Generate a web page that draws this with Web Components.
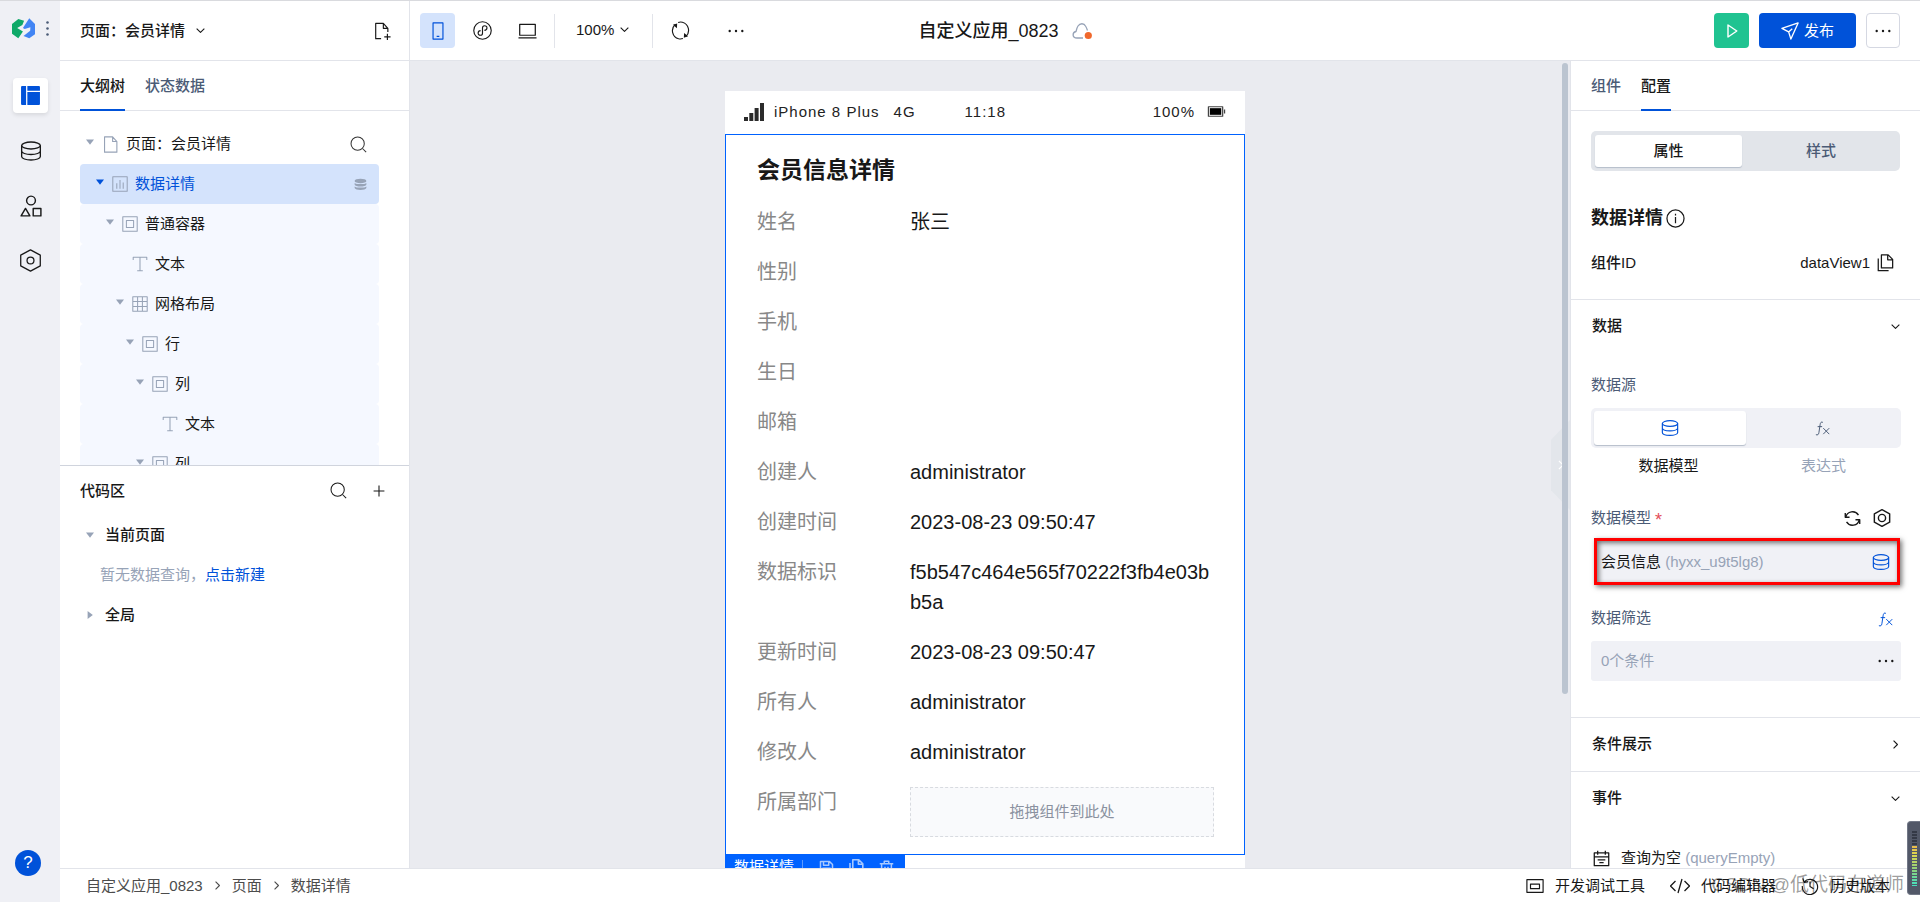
<!DOCTYPE html>
<html lang="zh-CN">
<head>
<meta charset="utf-8">
<title>自定义应用_0823</title>
<style>
html,body{margin:0;height:100%;}
body{font:15px/20px "Liberation Sans","Noto Sans CJK SC",sans-serif;color:#181818;background:#fff;overflow:hidden;}
</style>
</head>
<body>
<app-shell></app-shell>
<script>
const BASE = `
*{box-sizing:border-box}
button{font:inherit;color:inherit;background:none;border:0;padding:0;margin:0;cursor:pointer;display:flex;align-items:center;justify-content:center}
a{color:inherit;text-decoration:none}
h1,h2,h3,p,ul,dl,dd{margin:0;padding:0}
`;
const define = (name, css, html) => customElements.define(name, class extends HTMLElement {
  constructor() {
    super();
    this.attachShadow({mode: 'open'});
  }
  connectedCallback() {
    if (this.shadowRoot.childNodes.length) return;
    const t = document.createElement('template');
    t.innerHTML = `<style>${BASE}${css}</style>` + (typeof html === 'function' ? html(this) : html);
    this.shadowRoot.append(t.content.cloneNode(true));
  }
});

/* icon shapes on a 20 x 20 grid */
const DB = '<ellipse cx="10" cy="5" rx="8.5" ry="3.2"/><path d="M1.500 5v10c0 1.800 3.800 3.200 8.500 3.200s8.500-1.400 8.500-3.200V5M1.500 10c0 1.800 3.800 3.200 8.500 3.200s8.500-1.400 8.500-3.200"/>';
const HEX = '<path d="M10 .800 18.500 5.300v9.400L10 19.200l-8.500-4.500V5.300z"/>';
const ICONS = {
  logo: '<g stroke="none"><path fill="#0fa968" d="M0 6 5.500 1.800 10.500 3.200 9 7 4.500 9.600 9.500 12.500 5.500 18.500 0 14.500z"/><path fill="#4285f4" d="M20 6 15 1 9.500 9.500 11 10.500 16 9 15.800 12 10 16.500 15 18.500 20 15z"/></g>',
  vdots: '<g fill="currentColor" stroke="none"><circle cx="10" cy="2" r="1.700"/><circle cx="10" cy="10" r="1.700"/><circle cx="10" cy="18" r="1.700"/></g>',
  dots: '<g fill="currentColor" stroke="none"><circle cx="3" cy="10" r="1.300"/><circle cx="10" cy="10" r="1.300"/><circle cx="17" cy="10" r="1.300"/></g>',
  layout: '<g fill="currentColor" stroke="none"><path d="M1 2a1 1 0 0 1 1-1h3.800v18H2a1 1 0 0 1-1-1zM7 1h11a1 1 0 0 1 1 1v3.500H7zM7 6.700h12V18a1 1 0 0 1-1 1H7z"/></g>',
  db: DB,
  dbfill: '<g fill="currentColor" stroke="none"><ellipse cx="10" cy="4.500" rx="9" ry="3.500"/><path d="M1 7.500c2 2.400 16 2.400 18 0v3c-1 3.600-17 3.600-18 0zM1 13c2 2.400 16 2.400 18 0v2.500c-1 3.800-17 3.800-18 0z"/></g>',
  shapes: '<circle cx="10" cy="5" r="4"/><path d="M5 12.200 9 19H1zM12 12.200h7V19h-7z"/>',
  hex: HEX + '<circle cx="10" cy="10" r="3"/>',
  gear: HEX + '<circle cx="10" cy="10" r="4"/>',
  down: '<path d="m3 6.500 7 7 7-7"/>',
  right: '<path d="m6.500 3 7 7-7 7"/>',
  tri: '<path fill="currentColor" stroke="none" d="M0 4h20L10 17z"/>',
  tright: '<path fill="currentColor" stroke="none" d="M4 0v20l13-10z"/>',
  pageadd: '<path d="M9 18.500H3V1.500h8.500L16.500 7v4M11.500 1.500V7h5M16 13v7M12.500 16.500h7"/>',
  page: '<path d="M3 1h9.500L17.500 6.500V19H3zM12.500 1v5.500h5"/>',
  copy: '<path d="M6 1h7.500L18.500 6v9.500H6zM13 1v5.500h5.500M2.500 5v13.500H14"/>',
  phone: '<path d="M4.500 1h11v18h-11zM8.500 16h3"/>',
  mini: '<circle cx="10" cy="10" r="9.200"/><path d="M12 9.800c3.500-.300 3.600-4.800.200-4.800-1.200 0-2.200.900-2.200 2.200v5.600c0 1.300-1 2.200-2.200 2.200-3.300 0-3.200-4.500.200-4.800"/>',
  laptop: '<path d="M1.800 3.500h16.400v11.500H1.800zM.500 17.800h19"/>',
  sync: '<path d="M4.500 3.500a8.900 8.900 0 0 0 3.500 15.200M15.500 16.500a8.900 8.900 0 0 0-3.500-15.200M7.500 1.500a9 9 0 0 1 4.500-.200M12.500 18.500a9 9 0 0 1-4.500.200"/><path fill="currentColor" stroke="none" d="m2 4 4.500-1.500-.300 5zM18 16l-4.500 1.500.300-5z"/>',
  refresh: '<path d="M2 8.500A8.200 8.200 0 0 1 17 6M18 11.500A8.200 8.200 0 0 1 3 14M1.500 3.500v5h5M18.500 16.500v-5h-5"/>',
  cloud: '<path d="M11 17H5C0 17 0 11.500 4 10.500 4.500 8 5 6.500 6 5c2-3 6-3 7.500 0 1 1.500 1.500 3 2 4.500"/><circle cx="16.300" cy="14.500" r="3.600" fill="#f0682c" stroke="none"/>',
  play: '<path d="M5 2.500v15L16 10z"/>',
  plane: '<path d="M1 7 19 1l-8 18-2.500-8zM8.500 11 12.500 7.500"/>',
  search: '<circle cx="9" cy="9" r="7.800"/><path d="m15 15 4 4"/>',
  plus: '<path d="M10 1v18M1 10h18"/>',
  chart: '<path d="M1 1h18v18H1zM6 9v7M10 5v11M14 8v8"/>',
  box: '<path d="M1 1h18v18H1zM5.500 5.500h9v9h-9z"/>',
  text: '<path d="M1.500 5V1.500h17V5M10 1.500v17M6.500 18.500h7"/>',
  grid: '<path d="M1 1h18v18H1zM7 1v18M13 1v18M1 7h18M1 13h18"/>',
  info: '<circle cx="10" cy="10" r="9"/><path d="M10 8.500V15M10 5v1.800"/>',
  fx: '<path d="M10.500 1.800C8.200.600 7.200 2.200 6.800 5L5.200 15.500c-.400 2.700-1.800 3.700-4 2.700M3.500 7.500h6M11 9.500l8 8M19 9.500l-8 8"/>',
  event: '<path d="M1.500 3.500h17v15h-17zM5.500 1v4.500M14.500 1v4.500M1.500 8h17M5.500 11.500h9M7.500 14.800h5"/>',
  dev: '<path d="M1 3h18v14H1zM5 8h10v5H5z"/>',
  code: '<path d="m5.500 5-5 5 5 5M14.500 5l5 5-5 5M12 3 8 17"/>',
  history: '<path d="M3.500 5.500A8.500 8.500 0 1 1 1.500 10M2 1.500l1.500 4.500L8 5M10 5v5.500l4 2.500"/>',
  signal: '<g fill="#2b2b2b" stroke="none"><path d="M0 15h4v4H0zM5.300 11h4v8h-4zM10.600 6h4v13h-4zM16 1h4v18h-4z"/></g>',
  battery: '<path stroke="#444" d="M1.500 5h15v10h-15zM18.500 8v4"/><path fill="#000" stroke="none" d="M3 6.500h12v7H3z"/>',
  save: '<path d="M2 2h12l4 4v12H2zM6 2v5h7V2M5 18v-7h10v7"/>',
  trash: '<path d="M1 5h18M7 5V1.500h6V5M3.500 5v14h13V5M8 9v6M12 9v6"/>'
};
/* <ui-icon name size weight>: weight is the stroke width on the 20-unit grid */
define('ui-icon', `
:host{display:inline-flex;flex:none}
svg{display:block;fill:none;stroke:currentColor;stroke-linejoin:round}`,
  el => { const s = el.getAttribute('size') || 18;
    return `<svg width="${s}" height="${s}" viewBox="0 0 20 20" stroke-width="${el.getAttribute('weight') || 1.3}" aria-hidden="true">${ICONS[el.getAttribute('name')]}</svg>`; });

define('app-rail', `
:host{display:flex;flex-direction:column;background:#eff0f5;padding:15px 12px 26px 13px}
.brand{display:flex;align-items:center;gap:5px;height:24px;margin:0 0 38px -1px;color:#4b5b76}
nav{display:flex;flex-direction:column;gap:20px}
nav button{width:35px;height:35px;border-radius:4px}
nav .on{background:#fff;color:#0052d9;box-shadow:0 2px 4px #0000001a}
.help{margin-top:auto;margin-left:2px;width:26px;height:26px;border-radius:50%;background:#0052d9;color:#fff;font-size:17px}`, `
<div class="brand"><ui-icon name="logo" size="23"></ui-icon><ui-icon name="vdots" size="15"></ui-icon></div>
<nav>
<button class="on" aria-label="页面"><ui-icon name="layout" size="21"></ui-icon></button>
<button aria-label="数据"><ui-icon name="db" size="22" weight="1.200"></ui-icon></button>
<button aria-label="组件"><ui-icon name="shapes" size="22"></ui-icon></button>
<button aria-label="设置"><ui-icon name="hex" size="23" weight="1.100"></ui-icon></button>
</nav>
<button class="help">?</button>`);

define('app-header', `
:host{display:grid;grid-template-columns:1fr auto 1fr;border-bottom:1px solid #e2e4ea}
.left,.tools,.right,.mid{display:flex;align-items:center}
.page{width:350px;border-right:1px solid #e2e4ea;align-self:stretch;display:flex;align-items:center;justify-content:space-between;padding:0 18px 0 20px;flex:none}
.page button:first-child{font-weight:500;gap:10px}
.tools{padding-left:10px}
.tools button{width:35px;height:35px;border-radius:4px}
.tools button+button{margin-left:10px}
.tools .on{background:#d4e3fc;color:#0052d9}
.tools .zoom{width:auto;gap:5px;margin:0 22px 0 21px;padding-bottom:2px}
.tools i+button{margin-left:10px}
i{width:1px;height:34px;background:#e2e4ea}
.tools button+i{margin-left:9px}
.tools .zoom+i{margin-left:0}
.tools .last{margin-left:20px}
.mid{padding-left:30px;gap:13px;color:#97a3b7}
h1{font-size:18px;line-height:26px;font-weight:500;color:#181818}
.right{justify-content:flex-end;gap:10px;padding-right:20px}
.right button{width:35px;height:35px;border-radius:4px}
.run{background:#20c391;color:#fff}
.right .pub{width:97px;background:#0052d9;color:#fff;gap:5px}
.right .more{width:34px;border:1px solid #d5d8e2}`, `
<div class="left"><div class="page"><button>页面：会员详情 <ui-icon name="down" size="11" weight="2"></ui-icon></button><button aria-label="新建页面"><ui-icon name="pageadd" size="18"></ui-icon></button></div>
<div class="tools"><button class="on" aria-label="手机"><ui-icon name="phone"></ui-icon></button><button aria-label="小程序"><ui-icon name="mini" size="19" weight="1.200"></ui-icon></button><button aria-label="电脑"><ui-icon name="laptop" size="19"></ui-icon></button>
<i></i><button class="zoom">100% <ui-icon name="down" size="11" weight="2"></ui-icon></button><i></i><button aria-label="刷新"><ui-icon name="sync" size="19" weight="1.200"></ui-icon></button><button class="last" aria-label="更多"><ui-icon name="dots"></ui-icon></button></div></div>
<div class="mid"><h1>自定义应用_0823</h1><ui-icon name="cloud" size="20"></ui-icon></div>
<div class="right"><button class="run" aria-label="预览"><ui-icon name="play" size="16" weight="1.800"></ui-icon></button><button class="pub"><ui-icon name="plane" weight="1.500"></ui-icon>发布</button><button class="more" aria-label="更多"><ui-icon name="dots"></ui-icon></button></div>`);

define('tab-strip', `
:host{display:flex;gap:20px;height:50px;padding:0 20px;border-bottom:1px solid #e2e4ea;flex:none}`, `<slot></slot>`);
define('tab-item', `
:host{display:flex;color:#4b5b76;font-weight:500;margin-bottom:-1px}
:host([active]){color:#181818}
button{border-bottom:2px solid transparent;padding-top:2px}
:host([active]) button{border-bottom-color:#0052d9}`, `<button><slot></slot></button>`);

define('tree-row', `
:host{display:flex;align-items:center;height:40px;border-radius:4px;background:#f5f8ff;color:#181818;padding-right:12px;flex:none}
:host([root]){background:none}
:host([selected]){background:#d4e3fc;color:#0052d9}
.arrow{width:22px;padding-left:6px;margin-bottom:4px;display:flex;color:#97a3b7}
:host([selected]) .arrow{color:#0052d9}
.ic{color:#97a3b7;display:flex}
.label{margin-left:7px;flex:1}`,
  el => `<span class="arrow" style="margin-left:${el.getAttribute('level') * 10}px">${el.hasAttribute('leaf') ? '' : '<ui-icon name="tri" size="8"></ui-icon>'}</span><span class="ic"><ui-icon name="${el.getAttribute('icon')}" size="${el.hasAttribute('root') ? 17 : 16}" weight="1.300"></ui-icon></span><span class="label">${el.getAttribute('label')}</span><slot></slot>`);

define('outline-panel', `
:host{display:flex;flex-direction:column;min-height:0;border-right:1px solid #e2e4ea}
.tree{flex:341 1 0;min-height:0;overflow:hidden;display:flex;flex-direction:column;padding:13px 30px 0 20px;border-bottom:1px solid #d0d4dd}
.code{flex:402 1 0;min-height:0}
.head{display:flex;align-items:center;height:49px;gap:23px;padding:0 21px 0 20px}
h2{font-size:15px;font-weight:500;flex:1}
.line{display:flex;align-items:center;height:40px;font-weight:500;padding-left:26px}
.line ui-icon{color:#97a3b7;width:19px}
.empty{padding:10px 40px;color:#97a3b7}
.empty a{color:#0052d9}
.head button{width:18px}
tree-row button{color:#333}
tree-row[selected] button{color:#97a3b7}`, `
<tab-strip><tab-item active>大纲树</tab-item><tab-item>状态数据</tab-item></tab-strip>
<div class="tree">
<tree-row root level="0" icon="page" label="页面：会员详情"><button aria-label="搜索"><ui-icon name="search" size="17" weight="1.200"></ui-icon></button></tree-row>
<tree-row selected level="1" icon="chart" label="数据详情"><button aria-label="数据"><ui-icon name="dbfill" size="13"></ui-icon></button></tree-row>
<tree-row level="2" icon="box" label="普通容器"></tree-row>
<tree-row leaf level="3" icon="text" label="文本"></tree-row>
<tree-row level="3" icon="grid" label="网格布局"></tree-row>
<tree-row level="4" icon="box" label="行"></tree-row>
<tree-row level="5" icon="box" label="列"></tree-row>
<tree-row leaf level="6" icon="text" label="文本"></tree-row>
<tree-row level="5" icon="box" label="列"></tree-row>
</div>
<div class="code">
<div class="head"><h2>代码区</h2><button aria-label="搜索"><ui-icon name="search" size="17" weight="1.200"></ui-icon></button><button aria-label="新建"><ui-icon name="plus" size="12" weight="1.800"></ui-icon></button></div>
<div class="line"><ui-icon name="tri" size="8"></ui-icon>当前页面</div>
<p class="empty">暂无数据查询，<a href="#new">点击新建</a></p>
<div class="line"><ui-icon name="tright" size="8"></ui-icon>全局</div>
</div>`);

define('detail-row', `
:host{display:grid;grid-template-columns:153px 1fr;padding:10px 0;font-size:20px;line-height:30px}
.label{color:#888}
.value{overflow-wrap:anywhere}`, el => `<span class="label">${el.getAttribute('label')}</span><span class="value"><slot></slot></span>`);

define('phone-canvas', `
:host{position:relative;display:flex;justify-content:center;align-items:flex-start;background:#eaebf0;padding:30px 10px 0 0;overflow:hidden;min-height:0}
.phone{width:520px;height:100%;background:#fff}
.status{display:flex;align-items:center;height:43px;padding:0 19px 2px;letter-spacing:1px;color:#222}
.status ui-icon{margin-right:10px}
.net{margin-left:14px;margin-right:49px}
.pct{margin-left:auto;margin-right:12px}
.status ui-icon:last-child{margin:0}
.detail{position:relative;border:1px solid #0062ff;padding:19px 30px 17px 31px}
h2{font-size:23px;line-height:32px;font-weight:700;color:#181818;margin:0 0 11px}
.drop{display:flex;align-items:center;justify-content:center;height:50px;border:1px dashed #d8dbe0;background:#f9fafc;font-size:15px;line-height:20px;color:#8a919f}
.last{padding-bottom:0}
.bar{position:absolute;left:-1px;top:100%;display:flex;align-items:center;gap:14px;width:180px;height:26px;padding:0 10px 0 9px;background:#0062ff;color:#fff}
.bar i{width:1px;height:14px;background:#5c9aff;margin:0 1px 0 -6px}
.bar button{color:#a6c8ff;width:16px}
.track{position:absolute;right:2px;top:2px;width:6px;height:631px;border-radius:3px;background:#bbc4d0}
.fold{position:absolute;right:0;top:359px;width:19px;height:90px;background:#e3e6eb;clip-path:polygon(100% 0,0 22%,0 78%,100% 100%);color:#fff}`, `
<div class="phone">
<div class="status"><ui-icon name="signal" size="20"></ui-icon><span>iPhone 8 Plus</span><span class="net">4G</span><span>11:18</span><span class="pct">100%</span><ui-icon name="battery" size="19"></ui-icon></div>
<div class="detail"><h2>会员信息详情</h2>
<detail-row label="姓名">张三</detail-row>
<detail-row label="性别"></detail-row>
<detail-row label="手机"></detail-row>
<detail-row label="生日"></detail-row>
<detail-row label="邮箱"></detail-row>
<detail-row label="创建人">administrator</detail-row>
<detail-row label="创建时间">2023-08-23 09:50:47</detail-row>
<detail-row label="数据标识">f5b547c464e565f70222f3fb4e03bb5a</detail-row>
<detail-row label="更新时间">2023-08-23 09:50:47</detail-row>
<detail-row label="所有人">administrator</detail-row>
<detail-row label="修改人">administrator</detail-row>
<detail-row class="last" label="所属部门"><div class="drop">拖拽组件到此处</div></detail-row>
<div class="bar"><span>数据详情</span><i></i><button aria-label="保存"><ui-icon name="save" size="15" weight="2"></ui-icon></button><button aria-label="复制"><ui-icon name="copy" size="16" weight="2"></ui-icon></button><button aria-label="删除"><ui-icon name="trash" size="15" weight="2"></ui-icon></button></div>
</div></div>
<button class="fold" aria-label="收起"><ui-icon name="right" size="12" weight="2"></ui-icon></button>
<div class="track"></div>`);

define('config-panel', `
:host{display:flex;flex-direction:column;min-height:0;overflow:hidden;border-left:1px solid #e2e4ea}
section{padding:0 19px 0 20px;border-bottom:1px solid #e2e4ea;flex:none}
section:last-child{border:0}
.seg{display:grid;grid-template-columns:147fr 158fr;height:40px;padding:4px 0 4px 4px;border-radius:5px;background:#e2e5ea;color:#4b5b76;font-weight:500}
.seg button{border-radius:3px}
.seg .on{background:#fff;color:#181818;box-shadow:0 1px 1px #b5bdca}
.seg.soft{grid-template-columns:1fr 1fr;background:#f0f1f6;padding:3px;margin-top:13px}
.seg.soft .on{color:#0052d9}
.row{display:flex;align-items:center;justify-content:space-between;height:30px}
.basic{padding:20px 20px 21px}
.name{justify-content:flex-start;gap:3px;margin:32px 0 15px}
h2{font-size:18px;line-height:26px;font-weight:700}
b{font-size:15px;font-weight:500}
.id{display:flex;gap:6px;align-items:center;margin-right:6px}
.fold{width:100%;height:52px;padding-left:1px;justify-content:space-between}
.lab{display:flex;height:20px;align-items:center;color:#4b5b76}
.lab.first{margin-top:23px}
.lab em{color:#e34d59;font-size:18px;font-style:normal;margin-left:4px;padding-top:4px;flex:1}
.lab button{color:#181818}
.lab .set{margin:0 10px 0 12px}
.lab .bind{color:#0052d9;margin:2px 8px 0 auto}
.caps{display:grid;grid-template-columns:1fr 1fr;text-align:center;margin-top:8px;margin-bottom:32px}
.caps span+span,.dim{color:#97a3b7}
.source{width:calc(100% - 4px);height:47px;margin:10px 0 23px 3px;padding:0 7px 0 4px;justify-content:space-between;border:3px solid #f00;background:#f0f1f6;box-shadow:2px 2px 5px #0008,inset 2px 2px 5px #0008}
.source ui-icon{color:#0052d9}
.filter{width:100%;height:40px;margin:13px 0 36px;padding:0 6px 0 10px;justify-content:space-between;border-radius:3px;background:#f0f1f6}
section.rule{padding-bottom:1px}
.event{display:flex;align-items:center;height:30px;margin-top:19px;gap:11px;padding-left:2px}`, `
<tab-strip><tab-item>组件</tab-item><tab-item active>配置</tab-item></tab-strip>
<section class="basic">
<div class="seg"><button class="on">属性</button><button>样式</button></div>
<div class="row name"><h2>数据详情</h2><ui-icon name="info" size="19"></ui-icon></div>
<div class="row"><b>组件ID</b><span class="id">dataView1 <ui-icon name="copy" size="18" weight="1.400"></ui-icon></span></div>
</section>
<section>
<button class="fold"><b>数据</b><ui-icon name="down" size="11" weight="2"></ui-icon></button>
<div class="lab first">数据源</div>
<div class="seg soft"><button class="on" aria-label="数据模型"><ui-icon name="db" size="18"></ui-icon></button><button aria-label="表达式"><ui-icon name="fx" size="15"></ui-icon></button></div>
<div class="caps"><span>数据模型</span><span>表达式</span></div>
<div class="lab">数据模型<em>*</em><button aria-label="刷新"><ui-icon name="refresh" size="17" weight="1.600"></ui-icon></button><button class="set" aria-label="设置"><ui-icon name="gear" size="18" weight="1.600"></ui-icon></button></div>
<button class="source"><span>会员信息 <span class="dim">(hyxx_u9t5lg8)</span></span><ui-icon name="db" size="18"></ui-icon></button>
<div class="lab">数据筛选<button class="bind" aria-label="表达式"><ui-icon name="fx" size="15"></ui-icon></button></div>
<button class="filter"><span class="dim">0个条件</span><ui-icon name="dots"></ui-icon></button>
</section>
<section class="rule"><button class="fold"><b>条件展示</b><ui-icon name="right" size="11" weight="2"></ui-icon></button></section>
<section><button class="fold"><b>事件</b><ui-icon name="down" size="11" weight="2"></ui-icon></button>
<div class="event"><ui-icon name="event" size="17" weight="1.500"></ui-icon><span>查询为空 <span class="dim">(queryEmpty)</span></span></div></section>`);

define('status-bar', `
:host{display:flex;align-items:center;justify-content:space-between;border-top:1px solid #e2e4ea;background:#fff;padding:0 30px 0 26px}
nav{display:flex;align-items:center;gap:7px;color:#4c4c4c}
nav ui-icon{margin:0 2px}
.tools{display:flex;gap:25px}
.tools button{gap:11px}`, `
<nav aria-label="路径"><a href="#app">自定义应用_0823</a><ui-icon name="right" size="11" weight="2"></ui-icon><a href="#page">页面</a><ui-icon name="right" size="11" weight="2"></ui-icon><a href="#detail">数据详情</a></nav>
<div class="tools"><button><ui-icon name="dev"></ui-icon>开发调试工具</button><button><ui-icon name="code" size="20"></ui-icon>代码编辑器</button><button><ui-icon name="history" size="18"></ui-icon>历史版本</button></div>`);

/* floating level meter docked at the right edge of the window */
define('level-meter', `
:host{box-sizing:border-box;position:absolute;right:0;bottom:7px;width:13px;height:74px;border-radius:4px 0 0 4px;background:#525868;border:1px solid #727887;border-right:0;padding:8px 3px 8px 4px}
div{height:100%;background:repeating-linear-gradient(#525868 0 1px,transparent 1px 3px),linear-gradient(#343946 0 26%,#edb84a 27%,#d8d650 45%,#8fd27b 70%,#43e0c0)}`, `<div></div>`);

define('app-shell', `
:host{box-sizing:border-box;display:grid;position:relative;height:100vh;grid-template:60px minmax(0,1fr) 34px / 60px 350px minmax(0,1fr) 350px;border-top:1px solid #d9dade}
app-rail{grid-row:1 / 4}
app-header,status-bar{grid-column:2 / 5}
.mark{position:absolute;right:16px;bottom:4px;font-size:19px;line-height:26px;color:#0006;pointer-events:none}`, `
<app-rail></app-rail><app-header></app-header>
<outline-panel></outline-panel><phone-canvas></phone-canvas><config-panel></config-panel>
<status-bar></status-bar><span class="mark">CSDN @低代码布道师</span><level-meter></level-meter>`);
</script>
</body>
</html>
